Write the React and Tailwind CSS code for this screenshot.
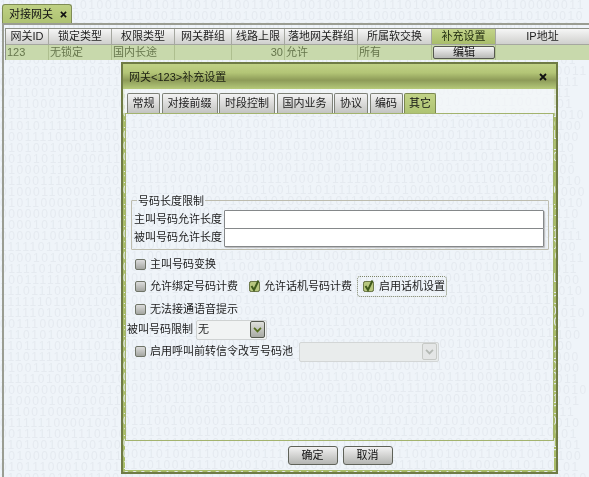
import React from "react";

function rows(seed, n, len) {
  let s = seed;
  const out = [];
  for (let i = 0; i < n; i++) {
    let r = "";
    for (let j = 0; j < len; j++) {
      s = (s * 1103515245 + 12345) & 0x7fffffff;
      r += (s >> 16) & 1 ? "1" : "0";
    }
    out.push(r);
  }
  return out;
}

const Binary = ({ seed = 7, n = 44, len = 72 }) => (
  <div className="absolute inset-0 overflow-hidden select-none pointer-events-none font-['Liberation_Sans',sans-serif] text-[12px] leading-[11px] tracking-[1.6px] text-[#e5eaf0] whitespace-pre">
    {rows(seed, n, len).map((r, i) => (
      <div key={i} className="h-[11px]">{r}</div>
    ))}
  </div>
);

const Check = ({ on }) => (
  <span className="flex-none w-[11px] h-[11px] rounded-[2px] border border-[#6f7468] bg-gradient-to-b from-[#dcdcdc] to-[#a4a6a1] relative">
    {on && (
      <svg viewBox="0 0 11 11" className="absolute -inset-[1px] w-[11px] h-[11px] overflow-visible">
        <rect x="0.5" y="0.5" width="10" height="10" rx="2" fill="#b7c77f" stroke="#6d7a49" />
        <path d="M2.5 5 L5 9 L9.5 -0.5" fill="none" stroke="#3f5a1c" strokeWidth="2" />
      </svg>
    )}
  </span>
);

const Cross = ({ size = 8 }) => (
  <svg viewBox="0 0 8 8" style={{ width: size, height: size }} className="flex-none">
    <path d="M1 1 L7 7 M7 1 L1 7" fill="none" stroke="#111" strokeWidth="1.8" />
  </svg>
);

const Chevron = ({ dim }) => (
  <span className={`flex-none w-[15px] h-[17px] rounded-[2px] border flex items-center justify-center ${dim ? "border-[#c6c9c6] bg-[#e4e6e6]" : "border-[#55594f] bg-gradient-to-b from-[#dfe0dc] to-[#a8aaa3]"}`}>
    <svg viewBox="0 0 10 7" className="w-[9px] h-[6px]">
      <path d="M1 1 L5 5.2 L9 1" fill="none" stroke={dim ? "#b3b8b3" : "#56701f"} strokeWidth="2" />
    </svg>
  </span>
);

const columns = [
  ["网关ID", "w-[43px]"],
  ["锁定类型", "w-[63px]"],
  ["权限类型", "w-[63px]"],
  ["网关群组", "w-[57px]"],
  ["线路上限", "w-[53px]"],
  ["落地网关群组", "w-[73px]"],
  ["所属软交换", "w-[74px]"],
  ["补充设置", "w-[64px]"],
  ["IP地址", "w-[94px]"],
];

const cells = ["123", "无锁定", "国内长途", "", "30", "允许", "所有", null, ""];

const tabs = [
  ["常规", "w-[33px]"],
  ["对接前缀", "w-[56px]"],
  ["时段控制", "w-[56px]"],
  ["国内业务", "w-[56px]"],
  ["协议", "w-[34px]"],
  ["编码", "w-[33px]"],
  ["其它", "w-[32px]"],
];

const Btn = ({ children }) => (
  <button className="w-[50px] h-[19px] rounded-[3px] border border-[#5f6259] bg-gradient-to-b from-[#f2f2f2] to-[#b4b5b2] text-[11px] leading-none text-[#111]">
    {children}
  </button>
);

export default function App() {
  return (
    <div className="relative w-[589px] h-[477px] overflow-hidden bg-[#eff4f9] font-['Liberation_Sans','Noto_Sans_CJK_SC',sans-serif] text-[11px] text-[#1c1c1c] blur-[0.3px]">
      <Binary seed={11} />
      <div className="relative flex flex-col h-full pt-[4px] pl-[2px]">
        <div className="flex-none w-[70px] h-[19px] rounded-t-[3px] border border-b-0 border-[#7f8c55] bg-gradient-to-b from-[#bfd184] to-[#aec272] flex items-center pl-[6px] gap-[7px] text-[#111] whitespace-nowrap">
          <span>对接网关</span>
          <Cross size={7} />
        </div>
        <div className="flex-1 border-l-2 border-t-2 border-[#9a9d92] pl-[1px] pt-[3px]">
          <div className="flex flex-col border-l border-t border-[#8d9086]">
            <div className="flex h-[16px]">
              {columns.map(([t, w], i) => (
                <div
                  key={t}
                  className={`${w} flex-none flex items-center justify-center border-r border-b border-[#a5a7a0] whitespace-nowrap ${i === 7 ? "bg-gradient-to-b from-[#c3d48a] to-[#a9bd6b] text-[#1f2a0e]" : "bg-gradient-to-b from-[#f6f6f6] to-[#cfd0cd]"}`}
                >
                  {t}
                </div>
              ))}
            </div>
            <div className="flex h-[15px] bg-[#c8d9ac] text-[#66764c]">
              {cells.map((c, i) => (
                <div
                  key={i}
                  className={`${columns[i][1]} flex-none flex items-center border-r border-[#aebf8f] pl-[1px] whitespace-nowrap ${i === 4 ? "justify-end pr-[1px]" : ""}`}
                >
                  {c === null ? (
                    <span className="w-[62px] h-[13px] rounded-[2px] border border-[#56594f] bg-gradient-to-b from-[#f4f4f4] to-[#b9bab7] flex items-center justify-center text-[#111]">
                      编辑
                    </span>
                  ) : (
                    c
                  )}
                </div>
              ))}
            </div>
          </div>
        </div>
      </div>

      <div className="absolute left-[121px] top-[62px] w-[437px] h-[412px] border-2 border-[#6f7b45] flex flex-col bg-[#eff4f9] shadow-[inset_0_0_0_2px_#a8bc68] overflow-hidden">
        <Binary seed={29} />
        <div className="relative flex-none h-[25px] flex items-center justify-between pl-[6px] pr-[9px] pt-[1px] bg-[linear-gradient(#c0d186_0%,#b3c576_35%,#8d9b58_65%,#a4b66c_85%,#b7ca7a_100%)] text-[#1c2012]">
          <span>网关&lt;123&gt;补充设置</span>
          <Cross />
        </div>
        <div className="relative flex-none flex gap-[1.5px] pl-[4px] pt-[4px] h-[24px] bg-[#f3f6f8]/70">
          {tabs.map(([t, w], i) => (
            <div
              key={t}
              className={`${w} flex-none h-[20px] rounded-t-[2px] border border-b-0 flex items-center justify-center ${i === 6 ? "bg-gradient-to-b from-[#c2d387] to-[#aec373] border-[#7b8850] text-[#111]" : "bg-gradient-to-b from-[#f3f3f3] to-[#c3c4c1] border-[#7e8178] text-[#1c1c1c]"}`}
            >
              {t}
            </div>
          ))}
        </div>
        <div className="relative flex-none h-[328px] mx-[2px] border border-[#a3b36e] flex flex-col px-[1px]">
          <fieldset className="mt-[86px] ml-[4px] w-[418px] h-[50px] border border-[#bdbcae] rounded-[1px] relative flex flex-col pt-[9px] pl-[2px]">
            <legend className="absolute left-[5px] -top-[7px] px-[1px] leading-[14px] bg-[#eff4f9] text-[#222]">号码长度限制</legend>
            <div className="flex h-[18px] items-center">
              <span className="w-[90px] whitespace-nowrap">主叫号码允许长度</span>
              <span className="w-[320px] h-[19px] bg-white border border-[#85888a] rounded-[1px] shadow-[1px_1px_1px_#bbb]" />
            </div>
            <div className="flex h-[18px] items-center">
              <span className="w-[90px] whitespace-nowrap">被叫号码允许长度</span>
              <span className="w-[320px] h-[19px] bg-white border border-[#85888a] rounded-[1px] shadow-[1px_1px_1px_#bbb]" />
            </div>
          </fieldset>
          <div className="mt-[5px] ml-[8px] flex items-center gap-[4px] h-[18px]">
            <Check />
            <span>主叫号码变换</span>
          </div>
          <div className="mt-[2px] ml-[8px] flex items-center h-[22px]">
            <Check />
            <span className="ml-[4px] w-[99px] whitespace-nowrap">允许绑定号码计费</span>
            <Check on />
            <span className="ml-[4px] w-[93px] whitespace-nowrap">允许话机号码计费</span>
            <span className="w-[90px] h-[21px] flex items-center gap-[5px] pl-[5px] rounded-[3px] border border-dotted border-[#7d8468] whitespace-nowrap">
              <Check on />
              <span>启用话机设置</span>
            </span>
          </div>
          <div className="mt-[3px] ml-[8px] flex items-center gap-[4px] h-[18px]">
            <Check />
            <span>无法接通语音提示</span>
          </div>
          <div className="mt-[1px] flex items-center h-[21px] whitespace-nowrap">
            <span className="w-[69px]">被叫号码限制</span>
            <span className="w-[71px] h-[20px] bg-[#f1f3f3] border border-[#cfd2d2] rounded-[2px] flex items-center justify-between pl-[1px] pr-[1px]">
              <span>无</span>
              <Chevron />
            </span>
          </div>
          <div className="mt-[1px] ml-[8px] flex items-center h-[21px] whitespace-nowrap">
            <Check />
            <span className="ml-[4px] w-[149px]">启用呼叫前转信令改写号码池</span>
            <span className="w-[140px] h-[20px] bg-[#e9ecec] border border-[#d3d6d6] rounded-[2px] flex items-center justify-end pr-[1px]">
              <Chevron dim />
            </span>
          </div>
        </div>
        <div className="relative flex-1 flex items-start justify-center gap-[5px] pt-[5px] pl-[1px]">
          <Btn>确定</Btn>
          <Btn>取消</Btn>
        </div>
      </div>
    </div>
  );
}
